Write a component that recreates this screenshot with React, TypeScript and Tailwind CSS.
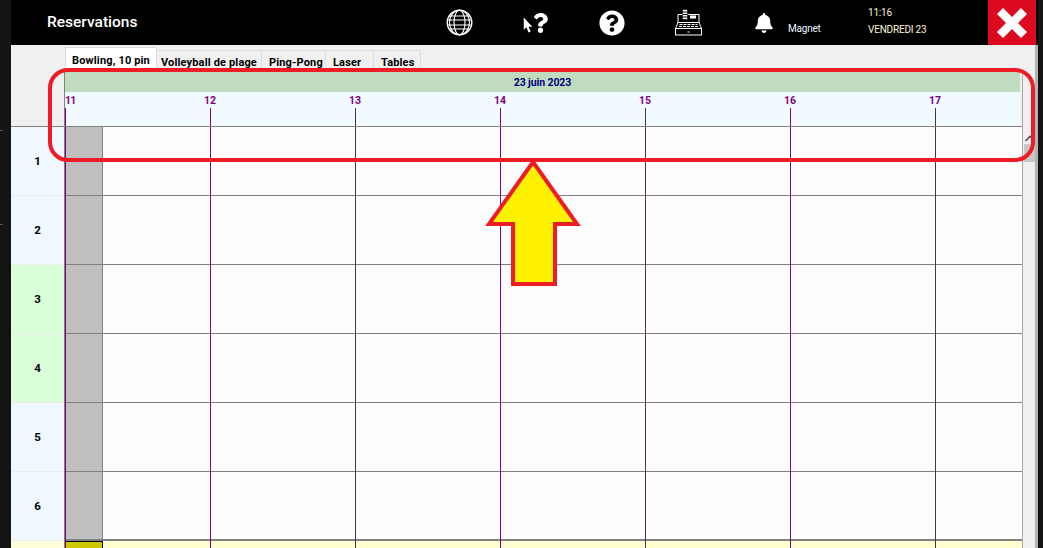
import React from "react";
import { FaBell, FaQuestion, FaQuestionCircle } from "react-icons/fa";

const tabs = [
  { label: "Volleyball de plage", width: "w-[105px] pl-[4px]" },
  { label: "Ping-Pong", width: "w-[64px] pl-[7px]" },
  { label: "Laser", width: "w-[48px] pl-[7px]" },
  { label: "Tables", width: "w-[47px] pl-[7px]" },
];

const hours = [
  { label: "11", line: "border-[#800080]" },
  { label: "12", line: "border-[#800080]" },
  { label: "13", line: "border-[#4d2f4d]" },
  { label: "14", line: "border-[#800080]" },
  { label: "15", line: "border-[#5c2a5c]" },
  { label: "16", line: "border-[#800080]" },
  { label: "17", line: "border-[#4d2f4d]" },
];

const lanes = [
  { label: "1", color: "bg-[#f0f8ff]" },
  { label: "2", color: "bg-[#f0f8ff]" },
  { label: "3", color: "bg-[#d9ffd9]" },
  { label: "4", color: "bg-[#d9ffd9]" },
  { label: "5", color: "bg-[#f0f8ff]" },
  { label: "6", color: "bg-[#f0f8ff]" },
];

const GlobeIcon = () => (
  <svg width="27" height="27" viewBox="0 0 27 27" fill="none" stroke="white" strokeWidth="1.1">
    <circle cx="13.5" cy="13.5" r="12.3" strokeWidth="1.4" />
    <ellipse cx="13.5" cy="13.5" rx="5.5" ry="12.3" />
    <ellipse cx="13.5" cy="13.5" rx="10" ry="12.3" />
    <path d="M3 7h21M1.5 11h24M1.5 16h24M3 20h21" />
  </svg>
);

const TillIcon = () => (
  <svg width="27" height="27" viewBox="0 0 27 27" fill="none" stroke="white" strokeWidth="1">
    <path d="M3 14V5.5h21V14" />
    <rect x="7.5" y="0.5" width="5" height="10" fill="white" stroke="black" strokeWidth="0.6" />
    <path d="M8 3h4M8 5.5h4M8 8h4" stroke="black" />
    <rect x="15" y="6.5" width="6" height="3" fill="white" stroke="none" />
    <path d="M3 13.5h21l2.5 6h-26z" />
    <path d="M4.5 15.5h18M4 17.5h19" strokeDasharray="3 1" />
    <rect x="0.5" y="19.5" width="26" height="6.5" />
    <path d="M12.5 23h2" />
  </svg>
);

const CloseIcon = () => (
  <svg width="30" height="30" viewBox="0 0 30 30" fill="none" stroke="white" strokeWidth="8.5">
    <path d="M3 3l24 24M27 3L3 27" />
  </svg>
);

const App = () => {
  return (
    <div className="relative flex h-[548px] w-[1043px] overflow-hidden bg-[#141414] font-['Roboto',sans-serif]">
      <div className="flex w-[11px] shrink-0 flex-col">
        <div className="mt-[130px] h-px w-[3px] bg-[#555555]" />
        <div className="mt-[93px] h-px w-[3px] bg-[#555555]" />
      </div>

      <div className="flex w-[1027px] shrink-0 flex-col">
        <header className="flex h-[45px] shrink-0 items-center bg-black text-white">
          <div className="ml-[36px] w-[399px] text-[15.5px] font-medium">Reservations</div>
          <div className="w-[50px]">
            <GlobeIcon />
          </div>
          <div className="ml-[27px] flex w-[50px] items-end">
            <svg width="10" height="16" viewBox="0 0 9 15" className="mb-[1px]" fill="white">
              <path d="M0.5 0.5v11.5l2.5-2.3 2 4.8 2-.8-2-4.6h3.5z" />
            </svg>
            <FaQuestion className="h-[22px] w-[15px]" />
          </div>
          <div className="ml-[26px]">
            <FaQuestionCircle className="h-[26px] w-[26px]" />
          </div>
          <div className="ml-[50px]">
            <TillIcon />
          </div>
          <div className="ml-[52px]">
            <FaBell className="h-[20px] w-[20px]" />
          </div>
          <div className="ml-[14px] mt-[12px] w-[80px] text-[10px] tracking-[-0.2px] text-[#eef4ff]">Magnet</div>
          <div className="mt-[-3px] flex w-[120px] flex-col gap-[5px] text-[10px] leading-[12px] tracking-[-0.2px] text-[#fff3d6]">
            <span>11:16</span>
            <span>VENDREDI 23</span>
          </div>
          <div className="flex h-[45px] w-[48px] items-center justify-center bg-[#dc0a1e]">
            <CloseIcon />
          </div>
        </header>

        <div className="flex min-h-0 flex-1 flex-col border-r-[3px] border-[#b4b4b4] bg-[#f0f0f0]">
          <div className="ml-[54px] flex h-[27px] shrink-0 items-end text-[11px] font-bold tracking-[0.15px] text-black">
            <div className="flex h-[25px] w-[92px] justify-center border border-b-0 border-[#dddddd] bg-white pt-[6px] leading-[14px]">
              Bowling, 10 pin
            </div>
            {tabs.map((tab) => (
              <div
                key={tab.label}
                className={`h-[22px] border-r border-t border-[#dddddd] pt-[5px] leading-[14px] ${tab.width}`}
              >
                {tab.label}
              </div>
            ))}
          </div>

          <div className="flex min-h-0 flex-1">
            <div className="flex w-[54px] shrink-0 flex-col border-r border-[#808080]">
              <div className="h-[55px] shrink-0 border-b border-[#808080]" />
              {lanes.map((lane) => (
                <div
                  key={lane.label}
                  className={`flex h-[69px] shrink-0 items-center justify-center border-b border-[#e8eef0] pt-[2px] text-[11.5px] font-bold text-black ${lane.color}`}
                >
                  {lane.label}
                </div>
              ))}
              <div className="flex-1 bg-[#ffffd8]" />
            </div>

            <div className="flex w-[957px] shrink-0 flex-col">
              <div className="h-[55px] shrink-0 border-b border-[#808080] pr-[2px]">
                <div className="flex h-[20px] items-center justify-center bg-[#bfdcbf] pt-[2px] text-[10.5px] font-bold tracking-[-0.1px] text-[#000080]">
                  23 juin 2023
                </div>
                <div className="flex h-[34px] bg-[#f0faff]">
                  {hours.map((hour, i) => (
                    <div key={hour.label} className="relative w-[145px] shrink-0">
                      <span
                        className={`absolute top-[3px] text-[10.5px] font-bold leading-[12px] text-[#800080] ${
                          i === 0 ? "left-0 tracking-[-0.8px]" : "left-0 -translate-x-1/2"
                        }`}
                      >
                        {hour.label}
                      </span>
                      <div className={`absolute bottom-0 left-0 h-[18px] border-l ${hour.line}`} />
                    </div>
                  ))}
                </div>
              </div>

              <div className="relative flex min-h-0 flex-1 flex-col">
                {lanes.map((lane, i) => (
                  <div
                    key={lane.label}
                    className={`flex h-[69px] shrink-0 border-[#808080] bg-[#fdfdfd] pr-px ${
                      i === lanes.length - 1 ? "border-b-2" : "border-b"
                    }`}
                  >
                    <div className="w-[38px] border-r border-[#808080] bg-[#c0c0c0]" />
                  </div>
                ))}
                <div className="flex flex-1 bg-[#ffffd0]">
                  <div className="w-[38px] border-r border-t border-black bg-[#cfc800]" />
                </div>
                <div className="absolute inset-0 flex">
                  {hours.map((hour) => (
                    <div key={hour.label} className={`w-[145px] shrink-0 border-l ${hour.line}`} />
                  ))}
                </div>
              </div>
            </div>

            <div className="flex w-[13px] shrink-0 flex-col border-l border-[#a8a8a8]">
              <svg width="12" height="12" viewBox="0 0 12 12" className="mt-[60px] shrink-0" fill="none" stroke="#555555" strokeWidth="1.6">
                <path d="M2.5 9L7 4.5 9.5 7" />
              </svg>
              <div className="ml-[1px] h-[18px] w-[11px] bg-[#c8c8c8]" />
            </div>
          </div>
        </div>
      </div>

      <div className="absolute left-[48px] top-[68px] h-[94px] w-[987px] rounded-[20px] border-[4.5px] border-[#ee1c25]" />
      <svg width="100" height="132" viewBox="0 0 100 132" className="absolute left-[483px] top-[157px]" fill="#fff200" stroke="#ee1c25" strokeWidth="4">
        <path d="M50 5 L6 67 H30 V127 H72 V67 H94 Z" />
      </svg>
    </div>
  );
};

export default App;
